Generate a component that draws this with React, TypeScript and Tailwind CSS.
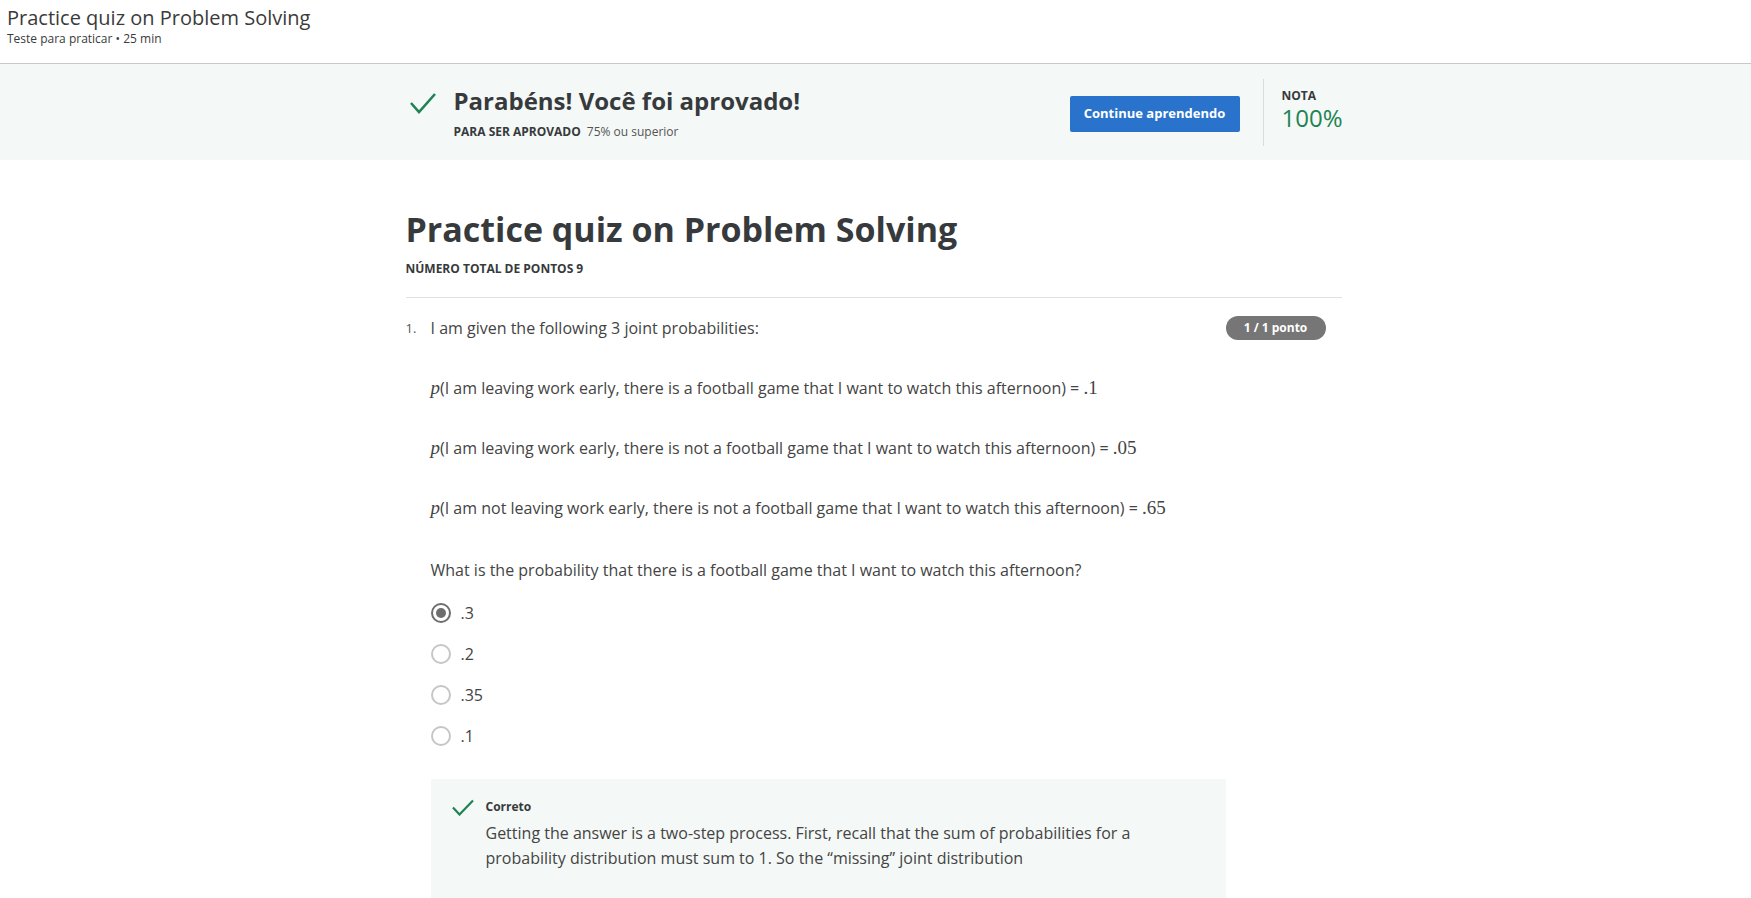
import React from "react";

function BigCheck() {
  return (
    <svg width="28" height="22" viewBox="0 0 28 22" className="ml-[1px] mt-[7px] shrink-0">
      <path d="M2 11 L10 20 L26 2" fill="none" stroke="#1f8354" strokeWidth="2.6" />
    </svg>
  );
}

function SmallCheck() {
  return (
    <svg width="22" height="17" viewBox="0 0 22 17" className="shrink-0">
      <path d="M1 8.5 L7.5 15.5 L21 1.5" fill="none" stroke="#1f8354" strokeWidth="2.2" />
    </svg>
  );
}

function Radio({ checked }: { checked?: boolean }) {
  return checked ? (
    <span className="w-[20px] h-[20px] rounded-full border-2 border-[#6e6e6e] flex items-center justify-center shrink-0">
      <span className="w-[10px] h-[10px] rounded-full bg-[#6e6e6e]" />
    </span>
  ) : (
    <span className="w-[20px] h-[20px] rounded-full border-2 border-[#c6c6c6] shrink-0" />
  );
}

function MathLine({ text, value }: { text: string; value: string }) {
  return (
    <div className="mt-[36px] text-[16px] leading-[24px] text-[#444]">
      <span className="font-['Liberation_Serif',serif] italic text-[19px] leading-none">p</span>
      {text} ={" "}
      <span className="font-['Liberation_Serif',serif] text-[19px] leading-none">{value}</span>
    </div>
  );
}

export default function App() {
  const options = [".3", ".2", ".35", ".1"];
  return (
    <div className="min-h-screen bg-white font-['Open_Sans',sans-serif] text-[#373a3c]">
      <header className="h-[64px] border-b border-[#c8c8c8] px-[7px] pt-[4px] text-[#3b3b3b]">
        <div className="text-[20px] leading-[28px]">Practice quiz on Problem Solving</div>
        <div className="text-[12px] leading-[16px] -mt-[1px]">Teste para praticar • 25 min</div>
      </header>

      <section className="h-[96px] bg-[#f4f8f6]">
        <div className="w-[936px] mx-auto h-full flex items-center">
          <div className="flex items-start">
            <BigCheck />
            <div className="ml-[17px]">
              <div className="text-[24px] font-bold leading-[32px] text-[#373a3c]">
                Parabéns! Você foi aprovado!
              </div>
              <div className="mt-[7px] text-[12px] leading-[16px] text-[#373a3c]">
                <span className="font-bold">PARA SER APROVADO</span>
                <span className="ml-[6px] text-[#555]">75% ou superior</span>
              </div>
            </div>
          </div>
          <div className="ml-auto flex items-center">
            <button className="mt-[4px] w-[170px] h-[36px] bg-[#2a73cc] rounded-[2px] text-white text-[13px] font-bold">
              Continue aprendendo
            </button>
            <div className="ml-[23px] w-px h-[67px] bg-[#dcdcdc]" />
            <div className="ml-[18px] w-[62px]">
              <div className="text-[12px] font-bold leading-[12px] text-[#373a3c]">NOTA</div>
              <div className="-mt-[1px] text-[24px] leading-[33px] text-[#1f8354]">100%</div>
            </div>
          </div>
        </div>
      </section>

      <main className="w-[940px] mx-auto pr-[4px] pt-[47px]">
        <h1 className="text-[34px] font-bold leading-[44px] text-[#373a3c]">
          Practice quiz on Problem Solving
        </h1>
        <div className="mt-[10px] text-[12px] font-bold leading-[16px] text-[#373a3c]">
          NÚMERO TOTAL DE PONTOS 9
        </div>
        <div className="mt-[20px] h-px bg-[#e1e1e1]" />

        <div className="flex pt-[18px]">
          <div className="w-[25px] text-[13px] leading-[24px] text-[#555]">1.</div>
          <div className="flex-1">
            <div className="flex justify-between items-start pr-[16px]">
              <p className="text-[16px] leading-[24px] text-[#444]">
                I am given the following 3 joint probabilities:
              </p>
              <span className="h-[24px] w-[100px] rounded-full bg-[#767676] text-white text-[12px] font-bold flex items-center justify-center">
                1 / 1 ponto
              </span>
            </div>

            <MathLine
              text="(I am leaving work early, there is a football game that I want to watch this afternoon)"
              value=".1"
            />
            <MathLine
              text="(I am leaving work early, there is not a football game that I want to watch this afternoon)"
              value=".05"
            />
            <MathLine
              text="(I am not leaving work early, there is not a football game that I want to watch this afternoon)"
              value=".65"
            />

            <p className="mt-[38px] text-[16px] leading-[24px] text-[#444]">
              What is the probability that there is a football game that I want to watch this afternoon?
            </p>

            <div className="mt-[19px] flex flex-col gap-[17px]">
              {options.map((o, i) => (
                <label key={o} className="flex items-center h-[24px]">
                  <Radio checked={i === 0} />
                  <span className="ml-[10px] text-[16px] leading-[24px] text-[#444]">{o}</span>
                </label>
              ))}
            </div>

            <div className="mt-[31px] w-[795px] bg-[#f4f8f6] pt-[20px] pl-[21px] pr-[20px] pb-[80px]">
              <div className="flex items-start">
                <SmallCheck />
                <span className="ml-[12px] text-[12px] font-bold leading-[16px] text-[#373a3c]">Correto</span>
              </div>
              <p className="ml-[34px] mt-[5px] text-[16px] leading-[25px] text-[#444]">
                Getting the answer is a two-step process. First, recall that the sum of probabilities for a
                probability distribution must sum to 1. So the “missing” joint distribution
              </p>
            </div>
          </div>
        </div>
      </main>
    </div>
  );
}
